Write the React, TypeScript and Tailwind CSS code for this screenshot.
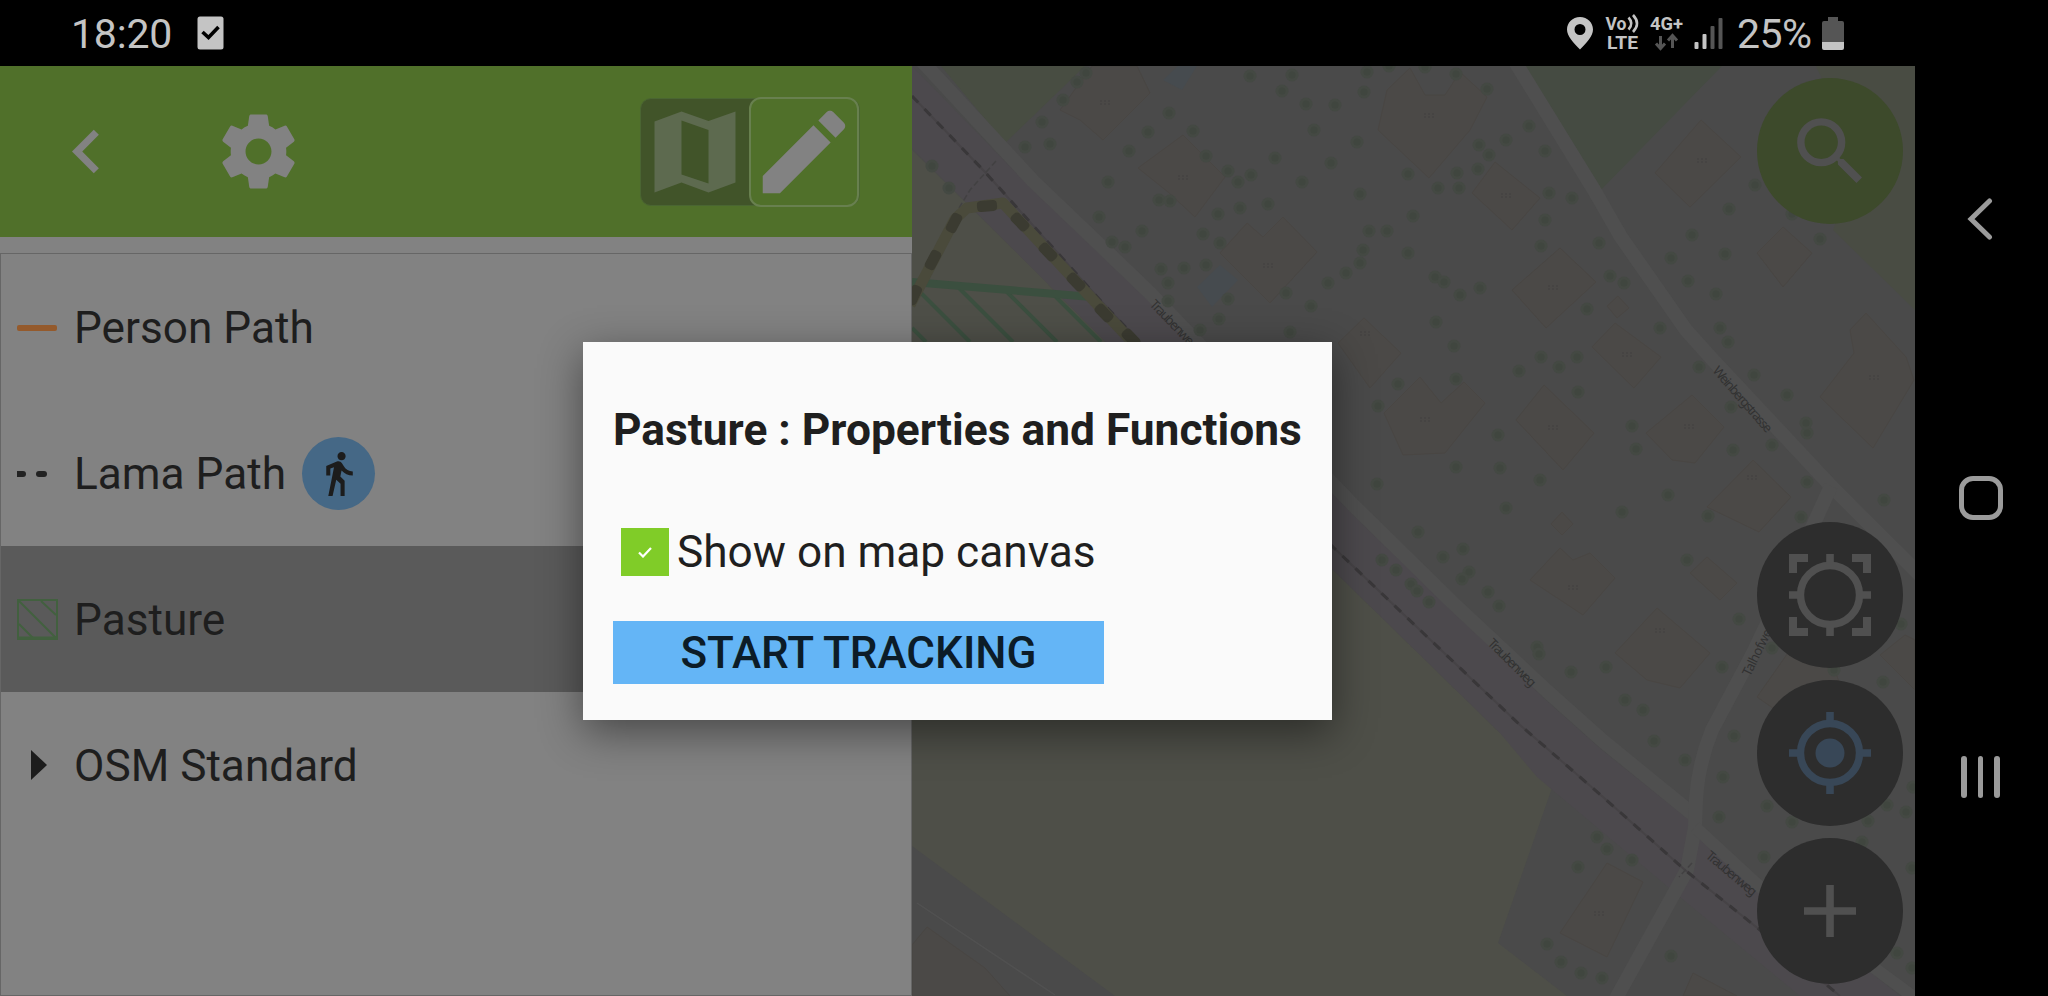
import type { ReactNode } from "react";
import { MdSearch } from "react-icons/md";

const TREES: [number, number][] = [
  [1086, 73], [1077, 82], [1063, 100], [1042, 122], [1025, 147], [1050, 144], [932, 166], [949, 188],
  [1108, 182], [1099, 217], [1112, 242], [1125, 247], [1129, 151], [1148, 132], [1193, 131], [1169, 113],
  [1206, 156], [1228, 171], [1238, 182], [1251, 175], [1275, 158], [1240, 208], [1218, 214], [1268, 204],
  [1203, 234], [1220, 243], [1142, 231], [1159, 200], [1170, 201], [1161, 269], [1184, 268], [1206, 265],
  [1168, 283], [1168, 301], [1228, 299], [1219, 319], [1200, 330], [1286, 293], [1311, 306], [1290, 332],
  [1328, 283], [1346, 273], [1360, 263], [1363, 250], [1369, 231], [1387, 231], [1360, 194], [1331, 163],
  [1357, 142], [1314, 130], [1302, 182], [1335, 105], [1306, 104], [1282, 91], [1292, 75], [1250, 76],
  [1364, 92], [1367, 72], [1389, 66], [1425, 67], [1456, 74], [1487, 89], [1529, 126], [1506, 140],
  [1479, 145], [1489, 155], [1478, 169], [1457, 173], [1459, 188], [1438, 188], [1408, 174], [1545, 151],
  [1549, 193], [1572, 198], [1545, 220], [1413, 216], [1408, 253], [1541, 246], [1599, 243], [1435, 277],
  [1444, 282], [1460, 295], [1480, 288], [1610, 276], [1624, 283], [1587, 309], [1436, 322], [1660, 328],
  [1454, 346], [1541, 357], [1577, 357], [1559, 367], [1519, 371], [1398, 384], [1456, 379], [1378, 406],
  [1578, 392], [1699, 367], [1498, 435], [1632, 426], [1636, 449], [1456, 467], [1500, 468], [1540, 480],
  [1377, 484], [1506, 508], [1622, 512], [1668, 495], [1418, 532], [1708, 516], [1801, 517], [1807, 482],
  [1884, 500], [1733, 450], [1772, 445], [1807, 433], [1806, 423], [1731, 407], [1787, 395], [1754, 375],
  [1728, 342], [1720, 328], [1716, 294], [1688, 281], [1725, 254], [1671, 258], [1692, 235], [1729, 209],
  [1755, 185], [1820, 239], [1792, 214], [1382, 560], [1396, 570], [1411, 584], [1417, 591], [1429, 602],
  [1443, 557], [1463, 549], [1469, 572], [1462, 579], [1488, 592], [1499, 606], [1537, 647], [1539, 654],
  [1571, 672], [1606, 667], [1687, 560], [1739, 619], [1722, 667], [1625, 700], [1643, 710], [1654, 741],
  [1685, 760], [1734, 736], [1723, 777], [1719, 817], [1597, 837], [1607, 849], [1632, 860], [1578, 867],
  [1547, 944], [1561, 962], [1581, 973], [1602, 978], [1671, 956], [1772, 648], [1834, 670], [1883, 682],
  [1901, 624], [1767, 806], [1792, 822], [1764, 857], [1868, 821], [1887, 805], [1906, 812], [1862, 842],
  [1912, 868], [1897, 953], [1912, 968], [1913, 787],
];

const BUILDINGS = [
  "1092,66 1137,66 1150,93 1103,140 1080,120 1060,110",
  "1138,168 1183,135 1225,177 1195,217 1168,192",
  "1220,253 1247,223 1263,237 1283,217 1317,252 1270,303",
  "1387,90 1410,68 1425,95 1445,95 1460,72 1487,97 1470,130 1429,178 1378,130",
  "1472,193 1495,162 1540,198 1512,230",
  "1512,290 1560,248 1596,282 1546,328",
  "1592,347 1615,323 1661,357 1634,388",
  "1607,306 1618,296 1629,308 1617,318",
  "1655,173 1701,120 1741,157 1690,207",
  "1757,253 1783,227 1812,253 1783,287",
  "1850,330 1866,313 1906,357 1914,380 1873,448 1820,397 1854,353",
  "1338,343 1364,318 1401,353 1370,388",
  "1384,413 1420,377 1441,403 1464,382 1485,403 1445,453 1403,455",
  "1516,420 1544,385 1594,433 1563,470",
  "1646,433 1692,395 1724,427 1695,463 1672,460",
  "1707,507 1753,460 1791,497 1759,532",
  "1551,524 1562,512 1573,524 1562,535",
  "1530,580 1560,548 1573,560 1590,553 1615,578 1583,615",
  "1615,653 1657,608 1710,653 1680,688 1647,680",
  "1690,573 1707,557 1737,583 1720,600",
  "1560,933 1607,863 1643,882 1607,957",
  "1683,996 1693,973 1737,996",
  "1757,697 1790,650 1835,670 1850,715 1790,720",
  "1880,655 1905,635 1915,640 1915,690",
  "927,927 985,968 1010,996 912,996 912,945",
];

const HOUSE_MARKS: [number, number][] = [
  [1105, 103], [1183, 178], [1268, 266], [1429, 116], [1506, 196], [1553, 288], [1627, 355], [1702, 161],
  [1874, 378], [1365, 334], [1425, 420], [1553, 428], [1689, 427], [1752, 478], [1573, 588], [1660, 631], [1599, 914],
];

const TRAIL_DASHES: [number, number, number][] = [
  [914, 295, -65], [933, 260, -62], [954, 223, -62], [987, 206, -5], [1020, 222, 46],
  [1048, 252, 46], [1076, 282, 46], [1104, 313, 46], [1131, 338, 46],
];

function MapCanvas() {
  return (
    <svg viewBox="912 66 1003 930" className="absolute inset-0 h-full w-full" aria-hidden="true">
      <rect x="912" y="66" width="1003" height="930" fill="#4a4a4a" />
      <path d="M941 66H1085L1005 143Z" fill="#484d42" />
      <path d="M1525 66H1722L1598 193Z" fill="#454b42" />
      <path d="M1816 66H1915V310L1833 230L1860 160Z" fill="#494c43" />
      <path d="M912 150L1017 253L1333 570L1500 733L1553 785L1498 943L1567 996H1115L912 846Z" fill="#4e4f48" />
      <path d="M912 66L1033 190L1150 301L1353 515L1453 611L1547 701L1603 751L1697 826L1760 890L1850 956L1900 996H1800L1680 897L1537 777L1500 733L1333 570L1017 253L912 148Z" fill="#4c494d" />
      {BUILDINGS.map((points) => (
        <polygon key={points} points={points} fill="#4b4947" stroke="#494643" strokeWidth="1" />
      ))}
      <path d="M1197 287L1220 265L1238 280L1212 307Z" fill="#464b4f" />
      <path d="M1163 80L1178 66H1197L1182 90Z" fill="#464b4f" />
      <g fill="none" stroke="#4f4f4f" strokeWidth="14" strokeLinejoin="round">
        <path d="M921 60L1033 181L1100 245L1150 293L1353 505L1453 603L1547 691L1603 741L1695 816" />
        <path d="M1514 60L1594 190L1621 237L1686 330L1713 360L1774 425L1831 486L1885 540L1920 575" />
        <path d="M1831 486L1795 565L1753 653L1712 730Q1698 765 1696 800L1695 827L1687 870L1614 1002" />
        <path d="M1695 827L1760 887L1850 950L1915 998" strokeWidth="12" />
      </g>
      <path d="M917 903L1055 995" stroke="#515151" strokeWidth="1.5" />
      {TREES.map(([x, y]) => (
        <g key={`${x}-${y}`}>
          <circle cx={x} cy={y} r="6.5" fill="#444943" />
          <circle cx={x} cy={y} r="3.5" fill="#40463f" />
        </g>
      ))}
      <path d="M912 96L985 172L1100 300L1333 547L1420 630L1520 725L1603 797L1685 870L1760 930L1840 996" fill="none" stroke="#464346" strokeWidth="2" />
      <path d="M912 96L985 172L1100 300L1333 547L1420 630L1520 725L1603 797L1685 870L1760 930L1840 996" fill="none" stroke="#393739" strokeWidth="3" strokeDasharray="9 9" />
      <path d="M996 161L970 190L937 244M1692 863L1679 877" fill="none" stroke="#424142" strokeWidth="1.5" strokeDasharray="6 3" />
      <g stroke="#3b4f3f" fill="none" strokeWidth="4">
        <path d="M918 290L970 342M959 288L1013 342M1007 292L1057 342M1054 295L1101 342M912 328L926 342" />
        <path d="M912 282L1092 297" strokeWidth="8" />
      </g>
      <path d="M910 305L955 219L967 208L1003 203L1135 345" fill="none" stroke="#4a4a3b" strokeWidth="11" strokeLinejoin="round" />
      {TRAIL_DASHES.map(([x, y, angle]) => (
        <rect key={`${x}`} x={x - 10} y={y - 5.5} width="20" height="11" rx="4" fill="#3b3b31" transform={`rotate(${angle} ${x} ${y})`} />
      ))}
      {HOUSE_MARKS.map(([x, y]) => (
        <path key={`${x}-${y}`} d={`M${x - 4} ${y - 3}v6M${x} ${y - 3}v6M${x + 4} ${y - 3}v6`} stroke="#444241" strokeWidth="1.2" strokeDasharray="2 1" />
      ))}
      <g fill="#323232" fontFamily="Noto Sans, sans-serif" fontSize="13">
        <text transform="translate(1149 305) rotate(46)" textLength="64">Traubenweg</text>
        <text transform="translate(1487 644) rotate(45)" textLength="62">Traubenweg</text>
        <text transform="translate(1705 857) rotate(40)" textLength="62">Traubenweg</text>
        <text transform="translate(1712 371) rotate(49)" textLength="83">Weinbergstrasse</text>
        <text transform="translate(1750 677) rotate(-64)" textLength="58">Talhofweg</text>
      </g>
    </svg>
  );
}

function Fab({ label, green, children }: { label: string; green?: boolean; children: ReactNode }) {
  return (
    <button
      aria-label={label}
      className={`flex size-[146px] shrink-0 items-center justify-center rounded-full text-[#505050] ${green ? "bg-[#3d4a2b]" : "bg-[#2d2d2d]"}`}
    >
      {children}
    </button>
  );
}

function Crosshair() {
  return (
    <>
      <circle r="29.5" fill="none" stroke="currentColor" strokeWidth="7.4" />
      <path d="M0 -41V-31M0 41V31M-41 0H-31M41 0H31" stroke="currentColor" strokeWidth="7.6" />
    </>
  );
}

function LayerRow({ name, selected, icon, badge }: { name: string; selected?: boolean; icon: ReactNode; badge?: ReactNode }) {
  return (
    <li className={`flex h-[146px] items-center pl-4 text-[44.2px] leading-none ${selected ? "bg-[#5a5a5a]" : ""}`}>
      <span className="flex w-[57px] shrink-0 items-center">{icon}</span>
      <span className="whitespace-nowrap pt-0.5">{name}</span>
      {badge}
    </li>
  );
}

function StatusBar() {
  return (
    <header className="flex h-[66px] shrink-0 items-center bg-black pl-[71px] pr-[71px] text-[41px] leading-none text-[#c4c4c4]">
      <span className="w-[126px] pt-0.5 tracking-[-0.2px]">18:20</span>
      <svg width="27" height="34" viewBox="0 0 27 34">
        <rect x="0.5" y="0.5" width="26" height="33" rx="2.5" fill="#c4c4c4" />
        <path d="M5.5 16L11.5 21.5L21.5 11" fill="none" stroke="#000" strokeWidth="3.6" />
      </svg>
      <div className="ml-auto flex items-center">
        <svg width="26" height="33" viewBox="0 0 26 33">
          <path fillRule="evenodd" fill="#c4c4c4" d="M13 0C5.5 0 0 5.6 0 12.500C0 19.500 6.500 25.500 13 32.500C19.500 25.500 26 19.500 26 12.500C26 5.600 20.500 0 13 0ZM13 7A5.500 5.500 0 1 1 13 18A5.500 5.500 0 1 1 13 7Z" />
        </svg>
        <svg className="ml-3 overflow-visible" width="38" height="50" viewBox="0 -6 38 50" fill="#c4c4c4" fontWeight="700">
          <text x="0.5" y="15.500" fontSize="18.500" textLength="21" lengthAdjust="spacingAndGlyphs">Vo</text>
          <path d="M23.500 3.500Q29 9.500 23.500 15.500M28 1Q36 9.500 28 18" fill="none" stroke="#c4c4c4" strokeWidth="2.600" />
          <text x="2" y="35" fontSize="19" textLength="31" lengthAdjust="spacingAndGlyphs">LTE</text>
        </svg>
        <svg className="ml-[7px] overflow-visible" width="34" height="50" viewBox="0 -6 34 50">
          <text x="0" y="16" fontSize="18" fontWeight="700" fill="#c4c4c4" textLength="33" lengthAdjust="spacingAndGlyphs">4G+</text>
          <path d="M10.500 22V34M6 29.500L10.500 34.500L15 29.500M22.500 34V22M18 26.500L22.500 21.500L27 26.500" fill="none" stroke="#555" strokeWidth="3" />
        </svg>
        <svg className="ml-[10px]" width="30" height="34" viewBox="0 0 30 34">
          <rect x="0.500" y="26" width="4" height="7" rx="1" fill="#c4c4c4" />
          <rect x="8.500" y="18" width="4" height="15" rx="1" fill="#c4c4c4" />
          <rect x="16.500" y="10" width="4" height="23" rx="1" fill="#555" />
          <rect x="24.500" y="2" width="4" height="31" rx="1" fill="#555" />
        </svg>
        <span className="ml-[13px] w-[77px] whitespace-nowrap pt-0.5 tracking-[-0.600px]">25%</span>
        <svg className="ml-2" width="22" height="33" viewBox="0 0 22 33">
          <path d="M6 0H16V4H20Q22 4 22 6V26H0V6Q0 4 2 4H6Z" fill="#555" />
          <path d="M0 25H22V31Q22 33 20 33H2Q0 33 0 31Z" fill="#c4c4c4" />
        </svg>
      </div>
    </header>
  );
}

function Sidebar() {
  return (
    <aside className="flex w-[912px] shrink-0 flex-col bg-[#828282]">
      <div className="flex h-[171px] shrink-0 items-center bg-[#50702a] pl-[43px] pr-[52px] text-[#828282]">
        <svg width="87" height="87" viewBox="0 0 24 24" fill="currentColor">
          <path d="M15.410 16.590L10.830 12l4.580-4.590L14 6l-6 6 6 6z" />
        </svg>
        <svg className="ml-[84px]" width="89" height="89" viewBox="0 0 24 24" fill="currentColor">
          <path d="M19.430 12.980c.04-.32.07-.64.07-.98s-.03-.66-.07-.98l2.110-1.650c.19-.15.24-.42.12-.64l-2-3.460c-.12-.22-.39-.3-.61-.22l-2.490 1c-.52-.4-1.080-.73-1.690-.98l-.38-2.650C14.460 2.180 14.250 2 14 2h-4c-.25 0-.46.18-.49.42l-.38 2.650c-.61.25-1.170.59-1.690.98l-2.490-1c-.23-.09-.49 0-.61.22l-2 3.460c-.13.22-.07.49.12.64l2.110 1.650c-.04.32-.07.65-.07.98s.03.66.07.98l-2.110 1.650c-.19.15-.24.42-.12.64l2 3.460c.12.22.39.3.61.22l2.490-1c.52.4 1.080.73 1.690.98l.38 2.650c.03.24.24.42.49.42h4c.25 0 .46-.18.49-.42l.38-2.650c.61-.25 1.170-.59 1.690-.98l2.490 1c.23.09.49 0 .61-.22l2-3.460c.12-.22.07-.49-.12-.64l-2.110-1.650zM12 15.500c-1.930 0-3.500-1.570-3.500-3.500s1.570-3.500 3.500-3.500 3.500 1.570 3.500 3.500-1.570 3.500-3.500 3.500z" />
        </svg>
        <div className="ml-auto flex h-[108px] items-center rounded-[11px] border border-[#4a6532] bg-[#415429]">
          <div className="flex w-[108px] justify-center text-[#5d6a4f]">
            <svg width="110" height="110" viewBox="0 0 24 24" fill="currentColor" fillRule="evenodd">
              <path d="M3 5.200L9 3l6 2.100L21 3V18.800L15 21L9 18.800L3 21ZM9 5V17L15 19V7.100Z" />
            </svg>
          </div>
          <div className="flex size-[110px] items-center justify-center rounded-[12px] border-2 border-[#68804f] bg-[#50702a]">
            <svg className="shrink-0" width="110" height="110" viewBox="0 0 24 24" fill="currentColor">
              <path d="M3 17.250V21h3.750L17.810 9.940l-3.750-3.750L3 17.250zM20.710 7.040c.39-.39.39-1.020 0-1.410l-2.340-2.340c-.39-.39-1.020-.39-1.410 0l-1.830 1.830 3.750 3.750 1.830-1.830z" />
            </svg>
          </div>
        </div>
      </div>
      <ul className="mt-4 flex-1 border border-[#666] text-[#1e1e1e]">
        <LayerRow name="Person Path" icon={<span className="mt-0.5 h-[6px] w-[40px] rounded-[2px] bg-[#945a2c]" />} />
        <LayerRow
          name="Lama Path"
          icon={
            <span className="mt-0.5 flex items-center gap-[10px]">
              <span className="h-[6px] w-[9px] rounded-r-[3px] bg-[#222]" />
              <span className="h-[6px] w-[11px] rounded-[3px] bg-[#222]" />
            </span>
          }
          badge={
            <span className="ml-4 flex size-[73px] items-center justify-center rounded-full bg-[#456886]">
              <svg width="49" height="49" viewBox="0 0 24 24" fill="#1c1c1c">
                <path d="M13.500 5.500c1.100 0 2-.9 2-2s-.9-2-2-2-2 .9-2 2 .9 2 2 2zM9.800 8.900L7 23h2.100l1.800-8 2.100 2v6h2v-7.500l-2.100-2 .6-3C14.800 12 16.800 13 19 13v-2c-1.900 0-3.500-1-4.300-2.400l-1-1.600c-.4-.6-1-1-1.700-1-.3 0-.5.1-.8.1L6 8.300V13h2V9.600l1.800-.7" />
              </svg>
            </span>
          }
        />
        <LayerRow
          selected
          name="Pasture"
          icon={
            <svg width="41" height="41" viewBox="0 0 41 41" fill="none" stroke="#42603f">
              <path d="M1 1H40V40H1Z" strokeWidth="2" />
              <path d="M2 2L39 39M24 2L39 16M2 25L16 39" strokeWidth="2" />
              <path d="M0 39H41" strokeWidth="3" />
            </svg>
          }
        />
        <LayerRow
          name="OSM Standard"
          icon={
            <svg className="ml-[14px]" width="16" height="30" viewBox="0 0 16 30" fill="#1c1c1c">
              <path d="M0 0L16 15L0 30Z" />
            </svg>
          }
        />
      </ul>
    </aside>
  );
}

function PropertiesDialog() {
  return (
    <div role="dialog" className="flex h-[378px] w-[749px] flex-col bg-[#fafafa] px-[30px] pt-[66px] text-[#1f1f1f] shadow-[0_12px_40px_rgba(0,0,0,0.45)]">
      <h1 className="whitespace-nowrap text-[44.3px] font-bold leading-[44px]">Pasture : Properties and Functions</h1>
      <label className="mt-[76px] flex h-12 items-center pl-2 text-[44.2px] leading-none">
        <span className="flex size-12 items-center justify-center bg-[#80cc28]">
          <svg width="14" height="11" viewBox="0 0 14 11" fill="none" stroke="#fff" strokeWidth="2.200">
            <path d="M1 5.500L5 9.500L13 1" />
          </svg>
        </span>
        <span className="ml-2 whitespace-nowrap">Show on map canvas</span>
      </label>
      <button className="mt-[45px] flex h-[63px] w-[491px] items-center justify-center bg-[#64b5f6] text-[44px] font-medium leading-none text-[#0c1c28]">
        START TRACKING
      </button>
    </div>
  );
}

function NavBar() {
  return (
    <nav className="flex w-[133px] shrink-0 flex-col items-center justify-center bg-black pr-[2px] text-[#9b9b9b]">
      <button aria-label="Back" className="flex h-[279px] items-center pr-0.5">
        <svg width="26" height="44" viewBox="0 0 26 44" fill="none" stroke="currentColor" strokeWidth="5" strokeLinecap="round">
          <path d="M22.500 4L4 22L22.500 40" />
        </svg>
      </button>
      <button aria-label="Home" className="flex h-[279px] items-center">
        <span className="size-[44px] rounded-[14px] border-[5px] border-[#9b9b9b]" />
      </button>
      <button aria-label="Recents" className="flex h-[279px] items-center gap-[11px]">
        <span className="h-[42px] w-[5.5px] rounded-full bg-[#9b9b9b]" />
        <span className="h-[42px] w-[5.5px] rounded-full bg-[#9b9b9b]" />
        <span className="h-[42px] w-[5.5px] rounded-full bg-[#9b9b9b]" />
      </button>
    </nav>
  );
}

export default function App() {
  return (
    <div className="flex h-[996px] w-[2048px] overflow-hidden bg-black font-[Roboto,sans-serif]">
      <div className="flex flex-1 flex-col">
        <StatusBar />
        <main className="relative flex flex-1">
          <Sidebar />
          <section className="relative flex flex-1 flex-col items-end justify-between overflow-hidden p-3">
            <MapCanvas />
            <div className="relative">
              <Fab label="Search" green>
                <MdSearch size={89} />
              </Fab>
            </div>
            <div className="relative flex flex-col gap-3">
              <Fab label="Zoom to extent">
                <svg width="82" height="82" viewBox="-41 -41 82 82">
                  <Crosshair />
                  <path d="M-37 -22V-37H-22M22 -37H37V-22M37 22V37H22M-22 37H-37V22" fill="none" stroke="currentColor" strokeWidth="8" />
                </svg>
              </Fab>
              <Fab label="My location">
                <svg className="text-[#384757]" width="82" height="82" viewBox="-41 -41 82 82">
                  <Crosshair />
                  <circle r="14.5" fill="currentColor" />
                </svg>
              </Fab>
              <Fab label="Add">
                <svg width="52" height="52" viewBox="0 0 52 52">
                  <path d="M26 0V52M0 26H52" stroke="currentColor" strokeWidth="7.6" />
                </svg>
              </Fab>
            </div>
          </section>
          <div className="absolute inset-0 flex items-center justify-center">
            <PropertiesDialog />
          </div>
        </main>
      </div>
      <NavBar />
    </div>
  );
}
